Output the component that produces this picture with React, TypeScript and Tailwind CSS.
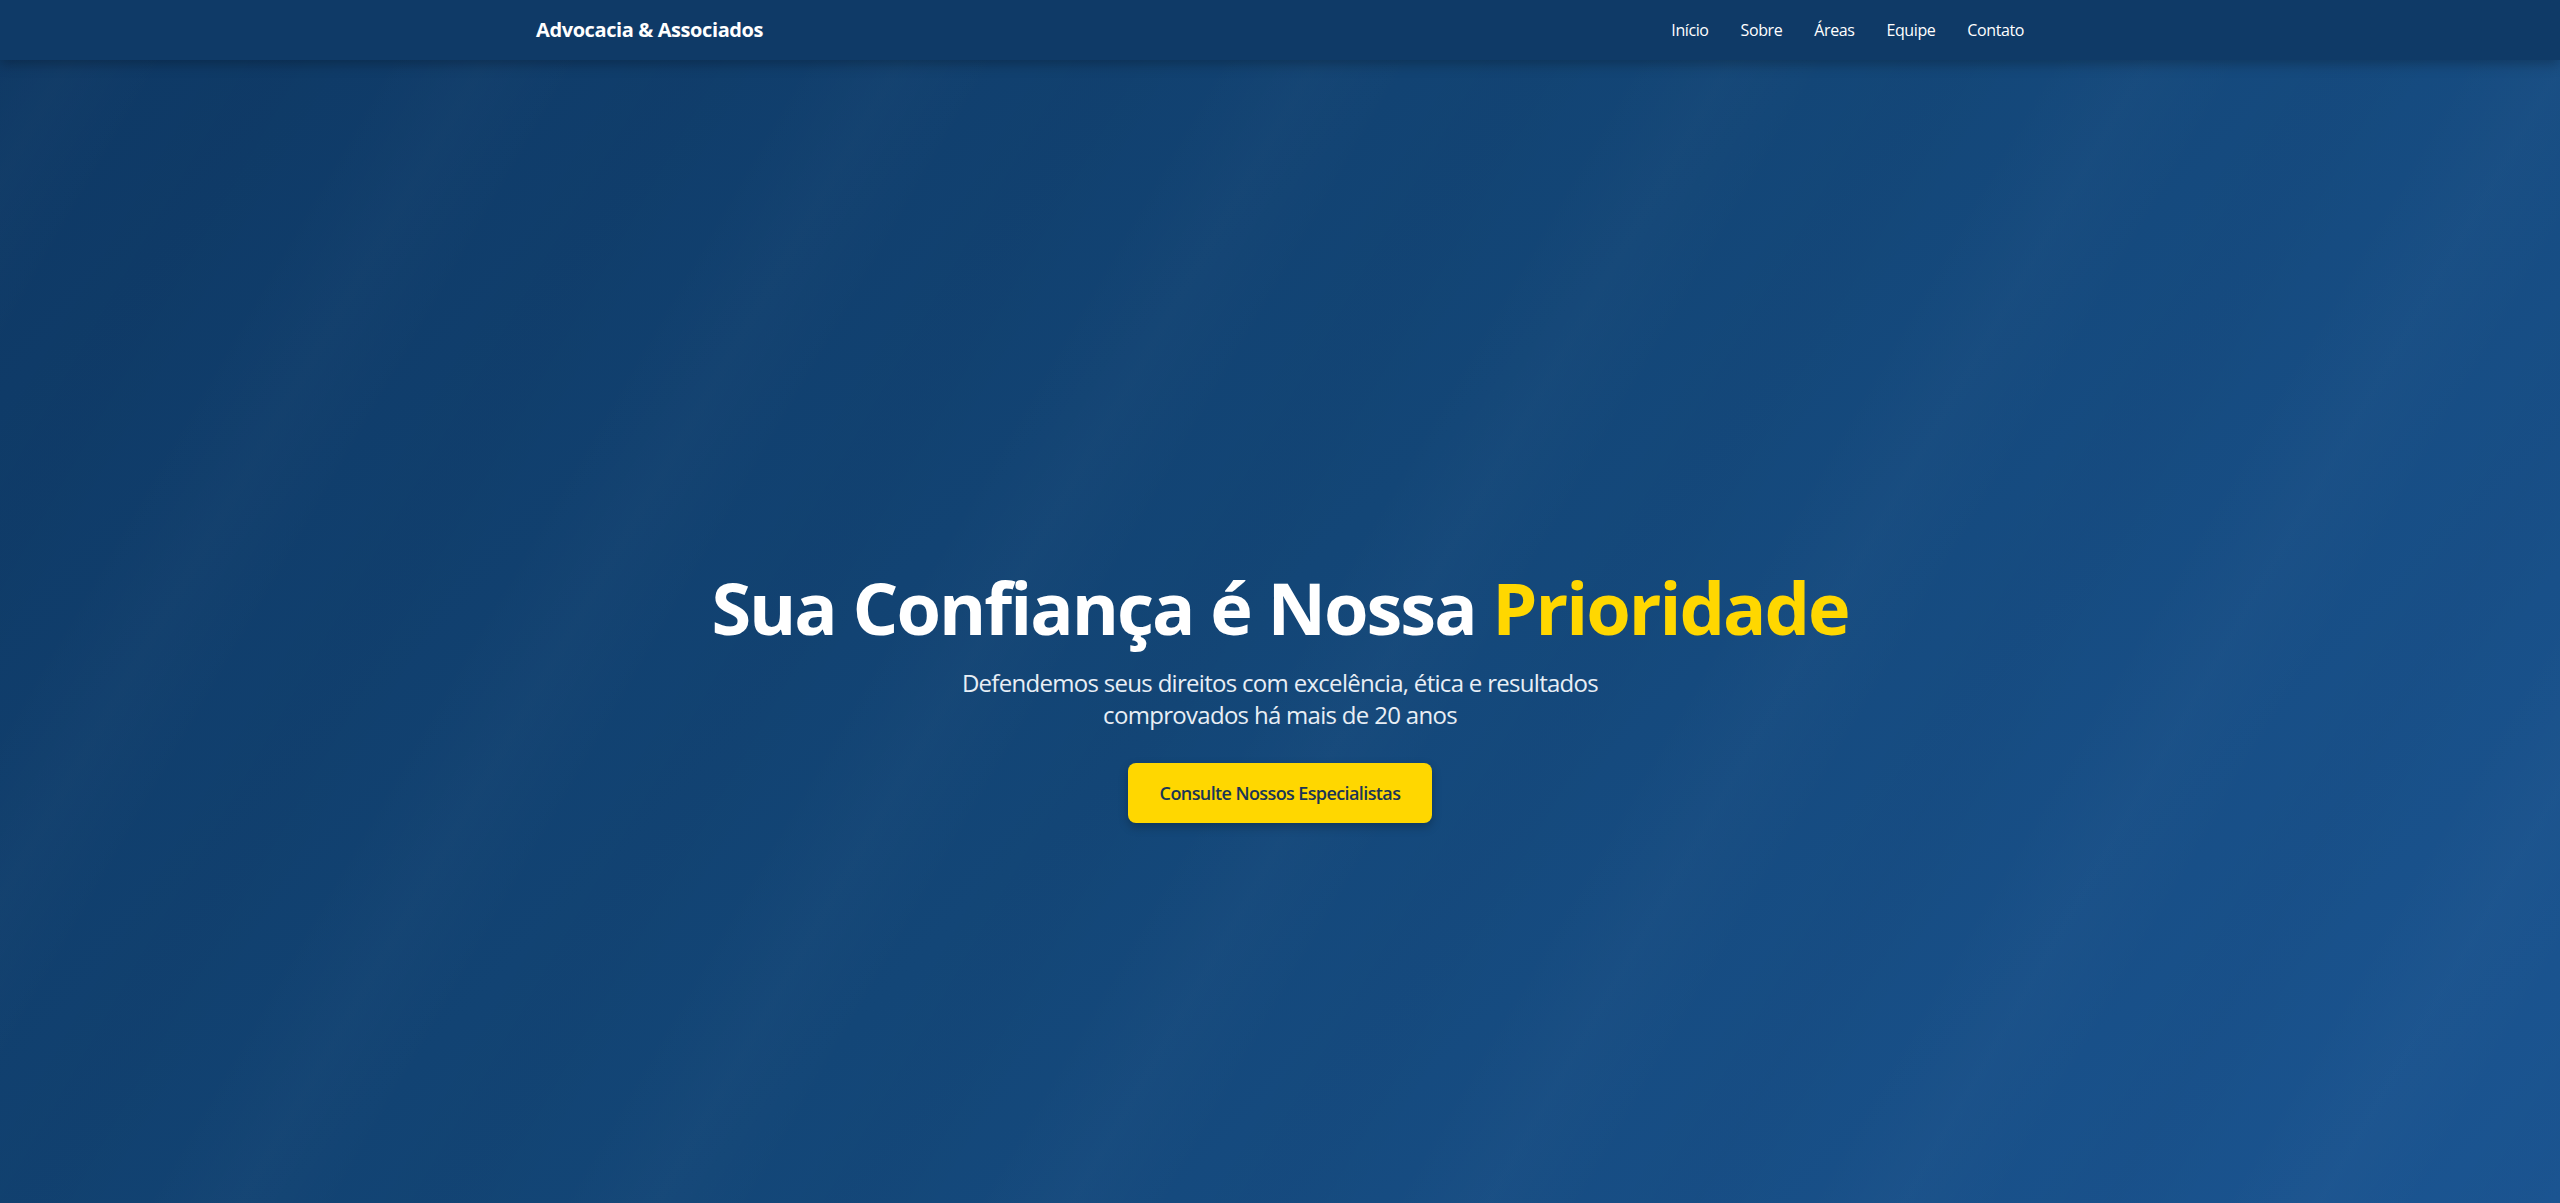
import React from "react";

export default function App() {
  return (
    <div className="min-h-screen w-full bg-[linear-gradient(135deg,#0e3864_0%,#134677_50%,#1b5592_100%)] font-['Open_Sans','Noto_Sans',sans-serif] text-white">
      <div className="min-h-screen w-full bg-[repeating-linear-gradient(120deg,rgba(255,255,255,0)_0px,rgba(255,255,255,0.014)_90px,rgba(255,255,255,0)_180px,rgba(0,0,0,0.012)_270px,rgba(255,255,255,0)_360px)]">
        <nav className="bg-[#0f3a67] shadow-[0_4px_12px_rgba(0,0,0,0.25)]">
          <div className="mx-auto flex h-[60px] max-w-[1536px] items-center justify-between px-6">
            <div className="text-xl font-bold tracking-[-0.4px]">Advocacia &amp; Associados</div>
            <ul className="flex items-center gap-8 text-base tracking-[-0.4px]">
              <li><a href="#" className="text-white">Início</a></li>
              <li><a href="#" className="text-white">Sobre</a></li>
              <li><a href="#" className="text-white">Áreas</a></li>
              <li><a href="#" className="text-white">Equipe</a></li>
              <li><a href="#" className="text-white">Contato</a></li>
            </ul>
          </div>
        </nav>
        <section className="flex min-h-[1143px] items-start justify-center pt-[511px]">
          <div className="flex flex-col items-center text-center">
            <h1 className="mb-6 text-7xl leading-none font-bold tracking-[-2px]">
              Sua Confiança é Nossa <span className="text-[#ffd700]">Prioridade</span>
            </h1>
            <p className="mb-8 max-w-2xl text-2xl leading-8 tracking-[-0.7px] text-[#e8eef5]">
              Defendemos seus direitos com excelência, ética e resultados comprovados há mais de 20 anos
            </p>
            <a
              href="#"
              className="rounded-lg bg-[#ffd700] px-8 py-4 text-lg leading-7 font-semibold tracking-[-0.6px] text-[#1a3556] shadow-[0_4px_10px_rgba(0,0,0,0.25)]"
            >
              Consulte Nossos Especialistas
            </a>
          </div>
        </section>
      </div>
    </div>
  );
}
